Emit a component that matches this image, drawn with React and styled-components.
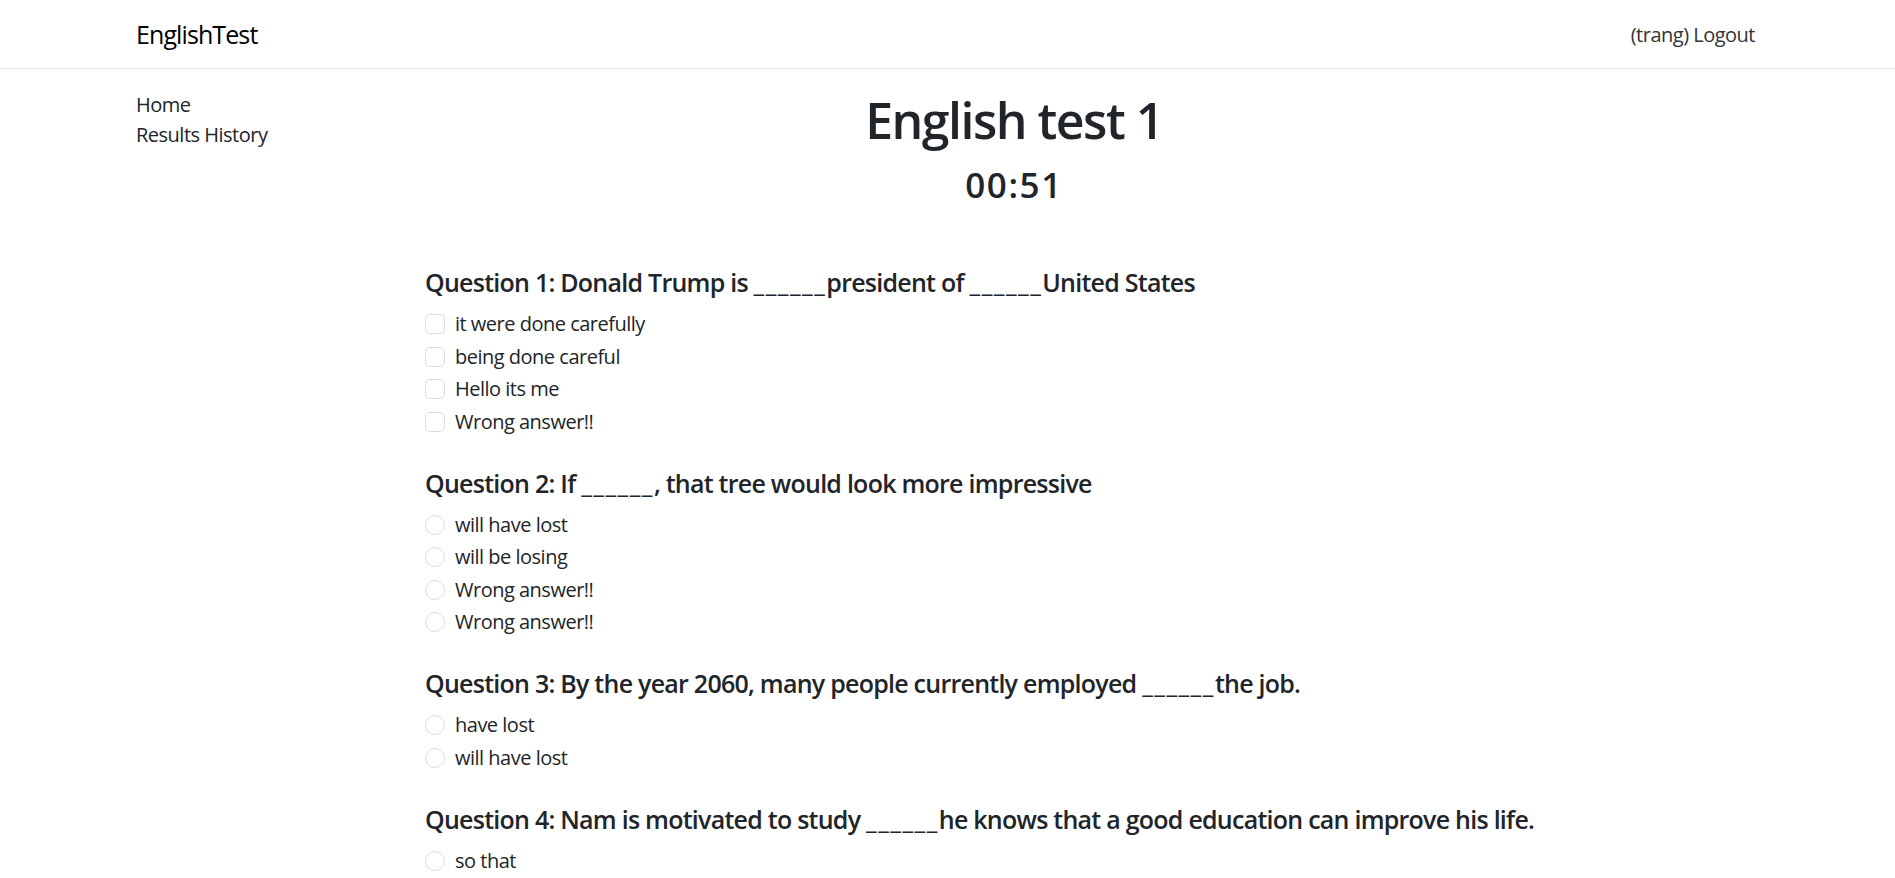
import React from 'react';
import styled, { createGlobalStyle } from 'styled-components';

const GlobalStyle = createGlobalStyle`
  * { box-sizing: border-box; }
  body {
    margin: 0;
    font-family: "Open Sans", "Noto Sans", sans-serif;
    font-size: 20px;
    line-height: 1.5;
    color: #212529;
    background: #fff;
  }
`;

const Navbar = styled.nav`
  height: 69px;
  border-bottom: 1px solid #e3e3e3;
  display: flex;
  align-items: center;
  justify-content: space-between;
  padding: 2px 140px 0 136px;
`;

const Brand = styled.a`
  font-size: 25px;
  color: #000;
  text-decoration: none;
  letter-spacing: -0.9px;
`;

const NavLink = styled.a`
  font-size: 20px;
  color: #333;
  text-decoration: none;
  letter-spacing: -0.5px;
`;

const Body = styled.div`
  display: flex;
  padding: 21px 136px 0;
`;

const Sidebar = styled.aside`
  width: 289px;
  flex-shrink: 0;
  display: flex;
  flex-direction: column;
`;

const SideLink = styled.a`
  color: #212529;
  text-decoration: none;
  line-height: 30px;
  letter-spacing: -0.5px;
`;

const Main = styled.main`
  width: 1178px;
`;

const Title = styled.h1`
  margin: 0 0 14px;
  font-size: 50px;
  font-weight: 600;
  line-height: 1.2;
  text-align: center;
  letter-spacing: -1.5px;
`;

const Timer = styled.h3`
  margin: 0 0 61px;
  font-size: 35px;
  font-weight: 600;
  line-height: 1.2;
  text-align: center;
  letter-spacing: 1.6px;
`;

const QuestionBlock = styled.section`
  margin-bottom: 31px;
`;

const QuestionTitle = styled.h5`
  margin: 0 0 12px;
  font-size: 25px;
  font-weight: 600;
  line-height: 1.2;
  letter-spacing: -0.75px;
  white-space: nowrap;
`;

const Blank = styled.span`
  letter-spacing: 1.5px;
`;

const Option = styled.label`
  display: flex;
  align-items: flex-start;
  min-height: 30px;
  margin-bottom: 2.5px;
  line-height: 30px;
  letter-spacing: -0.5px;
`;

const Box = styled.span`
  width: 20px;
  height: 20px;
  margin-top: 5px;
  margin-right: 10px;
  flex-shrink: 0;
  border: 1px solid #dcdcdc;
  border-radius: ${props => (props.$radio ? '50%' : '5px')};
  background: #fff;
`;

const questions = [
  {
    title: 'Question 1: Donald Trump is ______president of ______United States',
    multi: true,
    options: ['it were done carefully', 'being done careful', 'Hello its me', 'Wrong answer!!'],
  },
  {
    title: 'Question 2: If ______, that tree would look more impressive',
    options: ['will have lost', 'will be losing', 'Wrong answer!!', 'Wrong answer!!'],
  },
  {
    title: 'Question 3: By the year 2060, many people currently employed ______the job.',
    options: ['have lost', 'will have lost'],
  },
  {
    title: 'Question 4: Nam is motivated to study ______he knows that a good education can improve his life.',
    options: ['so that'],
  },
];

const renderTitle = (text) =>
  text.split(/(_+)/).map((part, i) =>
    part.startsWith('_') ? <Blank key={i}>{part}</Blank> : part
  );

export default function App() {
  return (
    <>
      <GlobalStyle />
      <Navbar>
        <Brand href="#">EnglishTest</Brand>
        <NavLink href="#">(trang) Logout</NavLink>
      </Navbar>
      <Body>
        <Sidebar>
          <SideLink href="#">Home</SideLink>
          <SideLink href="#">Results History</SideLink>
        </Sidebar>
        <Main>
          <Title>English test 1</Title>
          <Timer>00:51</Timer>
          {questions.map((q, i) => (
            <QuestionBlock key={i}>
              <QuestionTitle>{renderTitle(q.title)}</QuestionTitle>
              {q.options.map((opt, j) => (
                <Option key={j}>
                  <Box $radio={!q.multi} />
                  {opt}
                </Option>
              ))}
            </QuestionBlock>
          ))}
        </Main>
      </Body>
    </>
  );
}
